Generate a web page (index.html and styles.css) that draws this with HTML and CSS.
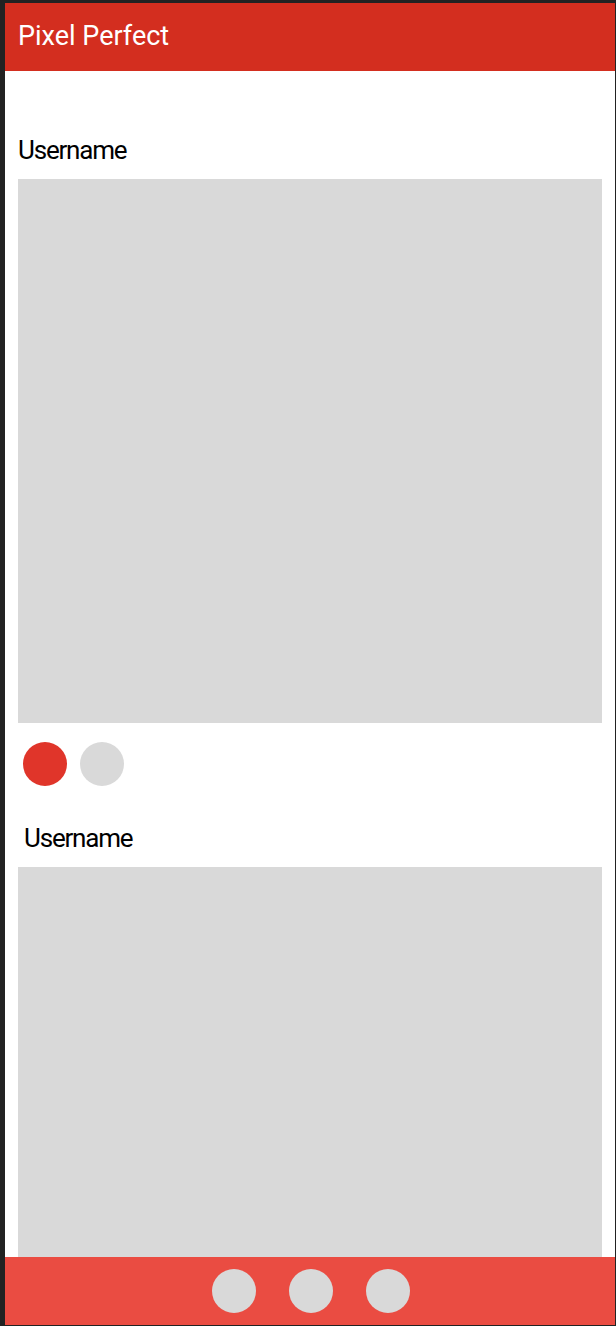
FILE: index.html
```html
<!DOCTYPE html>
<html>
<head>
<meta charset="utf-8">
<link rel="stylesheet" href="styles.css">
</head>
<body>
<div class="frame">
  <div class="app">
    <header class="topbar"><span class="title">Pixel Perfect</span></header>
    <main class="feed">
      <section class="post">
        <div class="username">Username</div>
        <div class="photo"></div>
        <div class="dots">
          <span class="dot active"></span>
          <span class="dot"></span>
        </div>
      </section>
      <section class="post second">
        <div class="username shifted">Username</div>
        <div class="photo"></div>
      </section>
    </main>
    <footer class="bottombar">
      <span class="navdot"></span>
      <span class="navdot"></span>
      <span class="navdot"></span>
    </footer>
  </div>
</div>
</body>
</html>
```
FILE: styles.css
```css
html, body {
  margin: 0;
  padding: 0;
  height: 100%;
  background: #222222;
}
.frame {
  box-sizing: border-box;
  height: 1326px;
  padding: 3px 1px 1px 5px;
}
.app {
  height: 100%;
  background: #ffffff;
  display: flex;
  flex-direction: column;
  overflow: hidden;
  font-family: Roboto, "Liberation Sans", sans-serif;
}
.topbar {
  flex: 0 0 68px;
  background: #d32e1f;
  display: flex;
  align-items: center;
  padding-left: 13px;
}
.title {
  color: #ffffff;
  font-size: 27px;
  letter-spacing: 0;
  margin-top: -2px;
}
.feed {
  flex: 1;
  overflow: hidden;
  padding: 64px 13px 0 13px;
}
.username {
  font-size: 26px;
  letter-spacing: -1.2px;
  color: #000000;
  line-height: 30px;
  height: 30px;
  margin-bottom: 14px;
}
.username.shifted {
  padding-left: 6px;
}
.photo {
  height: 544px;
  background: #d9d9d9;
}
.dots {
  display: flex;
  gap: 13px;
  padding: 19px 0 0 5px;
  height: 44px;
}
.dot {
  width: 44px;
  height: 44px;
  border-radius: 50%;
  background: #d9d9d9;
}
.dot.active {
  background: #e0352a;
}
.post.second {
  margin-top: 37px;
}
.bottombar {
  flex: 0 0 68px;
  background: #ea4c42;
  display: flex;
  justify-content: center;
  align-items: center;
  gap: 33px;
  padding-left: 2px;
}
.navdot {
  width: 44px;
  height: 44px;
  border-radius: 50%;
  background: #d9d9d9;
}
```
